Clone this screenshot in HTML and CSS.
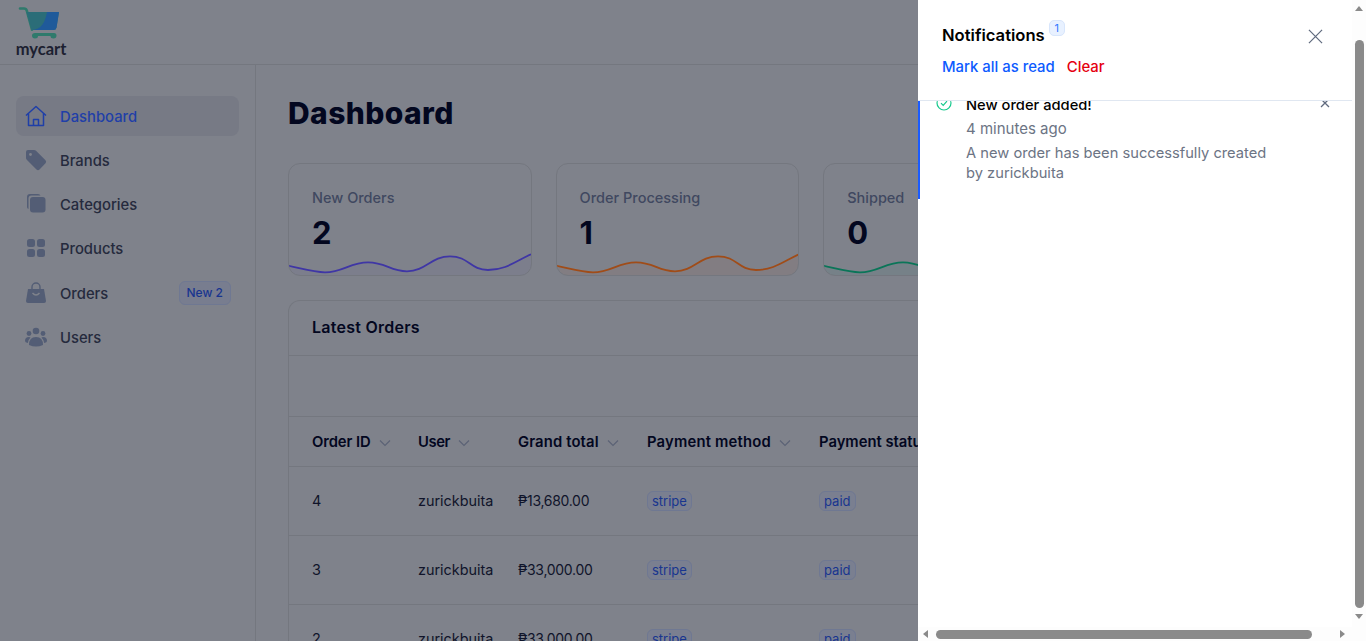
FILE: index.html
```html
<!doctype html>
<html>
<head>
<meta charset="UTF-8">
<title>Dashboard</title>
<link rel="stylesheet" href="styles.css">
</head>
<body>
<div class="page">
  <header class="topbar">
    <div class="logo">
      <svg class="logo-cart" viewBox="0 0 42 34">
        <path d="M2 2.500h4q2.200 0 2.800 2.200l5.200 19" fill="none" stroke="#2f7a6c" stroke-width="2.600" stroke-linecap="round"/>
        <path d="M8.500 6H41l-2.500 15.500q-.5 2.500-3 2.500H13.500z" fill="#2b6d78"/>
        <path d="M29 6h12l-2.500 15.500q-.5 2.500-3 2.500H14c9-.5 13-7 15-18z" fill="#1f5a9a"/>
        <path d="M17 27h19q2.500 0 2.500 2.500 0 3-3 3t-3-2.500H20q0 2.500-3 2.500t-3-3q0-2.500 3-2.500z" fill="#2f7a6c"/>
      </svg>
      <span class="logo-text">mycart</span>
    </div>
  </header>
  <div class="layout">
    <nav class="sidebar">
      <a class="nav-item active">
        <svg class="nav-icon" viewBox="0 0 22 22" fill="none" stroke="#1f3fa8" stroke-width="1.500" stroke-linejoin="round"><path d="M1 10.500 11 1.500l10 9"/><path d="M3.500 8.500V20.500h15V8.500"/><path d="M8.500 20.500v-6h5v6"/></svg>
        <span class="nav-label">Dashboard</span>
      </a>
      <a class="nav-item">
        <svg class="nav-icon" viewBox="0 0 22 22" fill="#535d75"><path d="M1 3q0-2 2-2h6q1.300 0 2 .8l9.500 9.500q1.300 1.500 0 3l-6 6.200q-1.500 1.300-3 0L2 11q-1-1-1-2z"/><circle cx="5.500" cy="5.500" r="1.400" fill="#7f828b"/></svg>
        <span class="nav-label">Brands</span>
      </a>
      <a class="nav-item">
        <svg class="nav-icon" viewBox="0 0 22 22" fill="#535d75"><path d="M2 14V4q0-3 3-3h8q2 0 2.500 1.500H6.500Q3.500 2.500 3.500 5.500V16Q2 15.500 2 14z"/><rect x="5" y="4" width="15.500" height="15.500" rx="3"/></svg>
        <span class="nav-label">Categories</span>
      </a>
      <a class="nav-item">
        <svg class="nav-icon" viewBox="0 0 22 22" fill="#535d75"><rect x="2" y="2" width="8" height="8" rx="2.500"/><rect x="12" y="2" width="8" height="8" rx="2.500"/><rect x="2" y="12" width="8" height="8" rx="2.500"/><rect x="12" y="12" width="8" height="8" rx="2.500"/></svg>
        <span class="nav-label">Products</span>
      </a>
      <a class="nav-item nav-orders">
        <svg class="nav-icon" viewBox="0 0 22 22" fill="#535d75"><path d="M3 7h16l2 12q0 2-2 2H3q-2 0-2-2z"/><path d="M7 7V5a4 4 0 0 1 8 0v2" fill="none" stroke="#535d75" stroke-width="1.400"/><path d="M7.500 11q3.500 4 7 0" fill="none" stroke="#7f828b" stroke-width="1.400"/></svg>
        <span class="nav-label">Orders</span>
        <span class="nav-badge">New 2</span>
      </a>
      <a class="nav-item">
        <svg class="nav-icon" viewBox="0 0 22 22" fill="#535d75"><circle cx="11" cy="5" r="3.300"/><circle cx="4" cy="7.500" r="2.400"/><circle cx="18" cy="7.500" r="2.400"/><path d="M4 19q0-8 7-8t7 8q-7 3-14 0z"/><path d="M0 15q0-4 4-4 1 0 1.500.5Q3 14 2.800 17 0 16.500 0 15zM22 15q0-4-4-4-1 0-1.500.5 2.500 2.500 2.700 5.500 2.800-.5 2.800-2z"/></svg>
        <span class="nav-label">Users</span>
      </a>
    </nav>
    <main class="content">
      <h1 class="page-title">Dashboard</h1>
      <section class="stats">
        <div class="stat">
          <div class="stat-label">New Orders</div>
          <div class="stat-value">2</div>
          <svg class="spark" viewBox="0 0 244 22" preserveAspectRatio="none"><path d="M0 12.700C12 15 25 19.300 37 19.300 55 19.300 62 9.300 80 9.300 98 9.300 102 18.300 119 18.300 138 18.300 143 3.300 162 3.300 181 3.300 182 17 200 17 218 17 228 8 243 1.300V22H0z" fill="#4a3fb0" fill-opacity=".05"/><path d="M0 12.700C12 15 25 19.300 37 19.300 55 19.300 62 9.300 80 9.300 98 9.300 102 18.300 119 18.300 138 18.300 143 3.300 162 3.300 181 3.300 182 17 200 17 218 17 228 8 243 1.300" fill="none" stroke="#3f36a5" stroke-width="1.800"/></svg>
        </div>
        <div class="stat">
          <div class="stat-label">Order Processing</div>
          <div class="stat-value">1</div>
          <svg class="spark" viewBox="0 0 244 22" preserveAspectRatio="none"><path d="M0 12.700C12 15 25 19.300 37 19.300 55 19.300 62 9.300 80 9.300 98 9.300 102 18.300 119 18.300 138 18.300 143 3.300 162 3.300 181 3.300 182 17 200 17 218 17 228 8 243 1.300V22H0z" fill="#a9521c" fill-opacity=".08"/><path d="M0 12.700C12 15 25 19.300 37 19.300 55 19.300 62 9.300 80 9.300 98 9.300 102 18.300 119 18.300 138 18.300 143 3.300 162 3.300 181 3.300 182 17 200 17 218 17 228 8 243 1.300" fill="none" stroke="#a04c18" stroke-width="1.800"/></svg>
        </div>
        <div class="stat">
          <div class="stat-label">Shipped</div>
          <div class="stat-value">0</div>
          <svg class="spark" viewBox="0 0 244 22" preserveAspectRatio="none"><path d="M0 12.700C12 15 25 19.300 37 19.300 55 19.300 62 9.300 80 9.300 98 9.300 102 18.300 119 18.300 138 18.300 143 3.300 162 3.300 181 3.300 182 17 200 17 218 17 228 8 243 1.300V22H0z" fill="#0c8566" fill-opacity=".08"/><path d="M0 12.700C12 15 25 19.300 37 19.300 55 19.300 62 9.300 80 9.300 98 9.300 102 18.300 119 18.300 138 18.300 143 3.300 162 3.300 181 3.300 182 17 200 17 218 17 228 8 243 1.300" fill="none" stroke="#0a7558" stroke-width="1.800"/></svg>
        </div>
      </section>
      <section class="orders">
        <h2 class="orders-title">Latest Orders</h2>
        <div class="orders-tools"></div>
        <table class="orders-table">
          <thead>
            <tr>
              <th class="col-id">Order ID<svg class="chev" viewBox="0 0 12 8"><path d="M1 1.500l5 5 5-5"/></svg></th>
              <th class="col-user">User<svg class="chev" viewBox="0 0 12 8"><path d="M1 1.500l5 5 5-5"/></svg></th>
              <th class="col-total">Grand total<svg class="chev" viewBox="0 0 12 8"><path d="M1 1.500l5 5 5-5"/></svg></th>
              <th class="col-method">Payment method<svg class="chev" viewBox="0 0 12 8"><path d="M1 1.500l5 5 5-5"/></svg></th>
              <th>Payment status</th>
            </tr>
          </thead>
          <tbody>
            <tr><td>4</td><td>zurickbuita</td><td class="money">₱13,680.00</td><td><span class="tag">stripe</span></td><td><span class="tag">paid</span></td></tr>
            <tr><td>3</td><td>zurickbuita</td><td class="money">₱33,000.00</td><td><span class="tag">stripe</span></td><td><span class="tag">paid</span></td></tr>
            <tr><td>2</td><td>zurickbuita</td><td class="money">₱33,000.00</td><td><span class="tag">stripe</span></td><td><span class="tag">paid</span></td></tr>
          </tbody>
        </table>
      </section>
    </main>
  </div>
</div>

<aside class="drawer">
  <div class="drawer-main">
    <div class="drawer-body">
      <div class="drawer-head">
        <div class="drawer-title-row">
          <span class="drawer-title">Notifications</span>
          <span class="count">1</span>
          <svg class="drawer-close" viewBox="0 0 16 16"><path d="M1 1l14 14M15 1L1 15"/></svg>
        </div>
        <div class="drawer-actions">
          <a class="link-blue">Mark all as read</a>
          <a class="link-red">Clear</a>
        </div>
      </div>
      <div class="notice-list">
        <div class="notice">
          <svg class="notice-icon" viewBox="0 0 16 16"><circle cx="8" cy="8" r="7"/><path d="M5 8.200l2.200 2.200L11 6.200"/></svg>
          <div class="notice-text">
            <div class="notice-title">New order added!</div>
            <div class="notice-time">4 minutes ago</div>
            <div class="notice-desc">A new order has been successfully created by zurickbuita</div>
          </div>
          <svg class="notice-close" viewBox="0 0 10 10"><path d="M1 1l8 8M9 1L1 9"/></svg>
        </div>
      </div>
    </div>
    <div class="hbar">
      <span class="arrow arrow-left"></span>
      <span class="hthumb"></span>
      <span class="arrow arrow-right"></span>
    </div>
  </div>
  <div class="vbar">
    <span class="arrow arrow-up"></span>
    <span class="vthumb"></span>
    <span class="arrow arrow-down"></span>
  </div>
</aside>
</body>
</html>
```
FILE: styles.css
```css
* { box-sizing: border-box; }
html, body { height: 100%; }
body { margin: 0; overflow: hidden; background: #7f828b; color: #03071f; font-family: "Inter", "Liberation Sans", sans-serif; font-size: 14px; }
a { display: block; }

/* dimmed page behind the drawer */
.page { height: 641px; overflow: hidden; }
.topbar { height: 65px; border-bottom: 1px solid #74777f; padding-left: 16px; }
.logo { width: 50px; display: flex; flex-direction: column; align-items: center; padding-top: 6px; }
.logo-cart { width: 42px; height: 34px; align-self: flex-start; margin-left: 2px; }
.logo-text { font-family: "Lato", sans-serif; font-weight: 700; font-size: 16.500px; line-height: 14px; color: #1c2030; margin-top: 2px; }
.layout { display: flex; height: 576px; }
.sidebar { width: 256px; flex: none; border-right: 1px solid #74777f; padding: 31px 16px 0; }
.nav-item { display: flex; align-items: center; width: 223px; height: 40px; margin-bottom: 4px; padding: 0 8px 0 9px; border-radius: 8px; color: #252a3d; font-weight: 500; font-size: 14.800px; }
.nav-item.active { background: #777a85; color: #1f3fa8; }
.nav-orders { height: 41px; }
.nav-icon { width: 22px; height: 22px; margin-right: 13px; flex: none; }
.nav-label { flex: 1; padding-top: 2px; }
.nav-badge { border: 1px solid #6f7892; background: #787d8f; color: #18358f; border-radius: 6px; font-size: 12px; padding: 3px 7px; line-height: 16px; }

.content { flex: 1; padding: 0 0 0 32px; min-width: 0; }
.page-title { margin: 30px 0 32px; font-size: 30px; line-height: 36px; font-weight: 800; letter-spacing: .4px; color: #03071f; }
.stats { display: flex; gap: 24px; }
.stat { width: 243.600px; height: 113px; flex: none; border: 1px solid #74777f; border-radius: 12px; overflow: hidden; padding-top: 24px; display: flex; flex-direction: column; }
.stat-label { padding-left: 23px; font-size: 14.500px; line-height: 20px; color: #404860; font-weight: 500; }
.stat-value { padding-left: 23px; font-size: 31px; line-height: 38px; font-weight: 700; color: #03071f; margin-top: 6px; }
.spark { display: block; width: 244px; height: 22px; margin-top: auto; margin-left: -1px; flex: none; }

.orders { margin-top: 24px; width: 800px; border: 1px solid #74777f; border-radius: 12px; border-bottom: 0; }
.orders-title { margin: 0; height: 55px; padding-left: 23px; line-height: 52px; font-size: 16px; letter-spacing: .25px; font-weight: 600; color: #03071f; border-bottom: 1px solid #74777f; }
.orders-tools { height: 61px; border-bottom: 1px solid #74777f; }
.orders-table { border-collapse: collapse; table-layout: fixed; width: 780px; }
.orders-table th { height: 49px; text-align: left; padding: 2px 0 0 23px; font-size: 14.800px; font-weight: 600; color: #03071f; white-space: nowrap; overflow: hidden; }
.orders-table td { height: 69px; padding: 0 0 0 23px; font-size: 14.400px; color: #10142a; border-top: 1px solid #74777f; white-space: nowrap; }
.orders-table th + th, .orders-table td + td { padding-left: 0; }
.orders-table .money { font-size: 14px; letter-spacing: -.3px; }
.col-id { width: 129px; letter-spacing: -.1px; }
.col-user { width: 100px; letter-spacing: -.4px; }
.col-total { width: 129px; letter-spacing: .15px; }
.col-method { width: 172px; letter-spacing: .2px; }
.chev { width: 12px; height: 8px; margin-left: 8px; fill: none; stroke: #5b6275; stroke-width: 1.100; }
.tag { display: inline-block; padding: 0 4px; height: 20px; line-height: 19px; font-size: 13px; color: #18358f; background: #7a7f90; border: 1px solid #6f7892; border-radius: 6px; }

/* drawer */
.drawer { position: fixed; top: 0; right: 0; bottom: 0; width: 448px; display: flex; background: #fff; }
.drawer-main { flex: 1; min-width: 0; display: flex; flex-direction: column; }
.drawer-body { flex: 1; min-height: 0; overflow: hidden; }
.drawer-head { height: 101px; padding: 19px 24px 0; border-bottom: 1px solid #e0e7f1; position: relative; z-index: 1; background: #fff; }
.drawer-title-row { display: flex; align-items: flex-start; }
.drawer-title { font-size: 16.600px; line-height: 32px; font-weight: 600; color: #000; }
.count { margin: 1px 0 0 4px; width: 16px; height: 16px; border: 1px solid #d8e6fc; border-radius: 5px; background: #e8f1ff; color: #2f78ff; font-size: 11px; line-height: 14px; text-align: center; }
.drawer-close { width: 15px; height: 15px; margin: 10px 5px 0 auto; fill: none; stroke: #5f6a7e; stroke-width: 1.300; }
.drawer-actions { display: flex; gap: 12px; margin-top: 4px; font-size: 14.900px; line-height: 24px; font-weight: 500; }
.link-blue { color: #0d5bff; }
.link-red { color: #e5000f; }
.notice-list { margin-top: -8px; }
.notice { display: flex; height: 106px; padding: 0 22px 0 16px; border-left: 2px solid #1b5cff; }
.notice-icon { width: 16px; height: 16px; flex: none; fill: none; stroke: #16c98d; stroke-width: 1.200; margin: 2px 14px 0 0; }
.notice-text { width: 310px; }
.notice-title { font-size: 14.700px; line-height: 22px; font-weight: 500; color: #000; margin-top: 1px; }
.notice-time { font-size: 15px; line-height: 24px; color: #6c7484; margin-top: 1px; }
.notice-desc { font-size: 14.700px; line-height: 20px; color: #6c7484; margin-top: 2px; }
.notice-close { width: 10px; height: 10px; flex: none; margin: 5px 0 0 auto; fill: none; stroke: #5f6a7e; stroke-width: 1.300; }

/* scrollbars */
.hbar { height: 14px; flex: none; display: flex; align-items: center; background: #fdfdfd; padding: 0 7px 0 5px; }
.hthumb { width: 376px; height: 9px; border-radius: 5px; background: #8a8a8a; margin: 0 auto 0 8px; }
.vbar { width: 14px; flex: none; display: flex; flex-direction: column; align-items: center; background: #fdfdfd; padding: 6px 0 22px; }
.vthumb { width: 9px; height: 568px; border-radius: 5px; background: #8a8a8a; margin: 29px 0 auto; }
.arrow { width: 0; height: 0; border: 4px solid transparent; flex: none; }
.arrow-left { border-right: 5px solid #8a8a8a; border-left: 0; }
.arrow-right { border-left: 5px solid #8a8a8a; border-right: 0; }
.arrow-up { border-bottom: 5px solid #8a8a8a; border-top: 0; }
.arrow-down { border-top: 5px solid #8a8a8a; border-bottom: 0; }
```
